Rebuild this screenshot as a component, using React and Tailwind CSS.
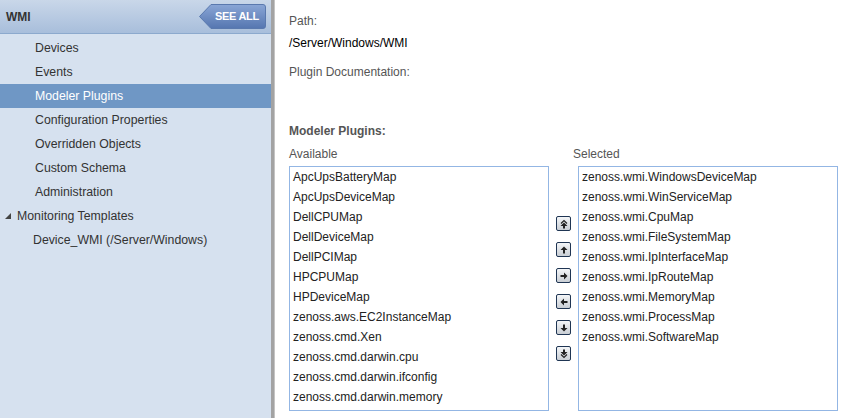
import React from "react"

const navItems = [
  "Devices",
  "Events",
  "Modeler Plugins",
  "Configuration Properties",
  "Overridden Objects",
  "Custom Schema",
  "Administration",
]

const available = [
  "ApcUpsBatteryMap",
  "ApcUpsDeviceMap",
  "DellCPUMap",
  "DellDeviceMap",
  "DellPCIMap",
  "HPCPUMap",
  "HPDeviceMap",
  "zenoss.aws.EC2InstanceMap",
  "zenoss.cmd.Xen",
  "zenoss.cmd.darwin.cpu",
  "zenoss.cmd.darwin.ifconfig",
  "zenoss.cmd.darwin.memory",
]

const selected = [
  "zenoss.wmi.WindowsDeviceMap",
  "zenoss.wmi.WinServiceMap",
  "zenoss.wmi.CpuMap",
  "zenoss.wmi.FileSystemMap",
  "zenoss.wmi.IpInterfaceMap",
  "zenoss.wmi.IpRouteMap",
  "zenoss.wmi.MemoryMap",
  "zenoss.wmi.ProcessMap",
  "zenoss.wmi.SoftwareMap",
]

// little arrow glyphs for the move buttons
const arrows = {
  top: (
    <>
      <path d="M2 4.5 L5 1.5 L8 4.5" fill="none" stroke="#222" strokeWidth="1.2" />
      <path d="M5 3.5 L8.5 7 L6 7 L6 9.5 L4 9.5 L4 7 L1.5 7 Z" fill="#222" />
    </>
  ),
  up: <path d="M5 1.5 L8.5 5 L6 5 L6 8.5 L4 8.5 L4 5 L1.5 5 Z" fill="#222" />,
  right: <path d="M8.5 5 L5 1.5 L5 4 L1.5 4 L1.5 6 L5 6 L5 8.5 Z" fill="#222" />,
  left: <path d="M1.5 5 L5 1.5 L5 4 L8.5 4 L8.5 6 L5 6 L5 8.5 Z" fill="#222" />,
  down: <path d="M5 8.5 L8.5 5 L6 5 L6 1.5 L4 1.5 L4 5 L1.5 5 Z" fill="#222" />,
  bottom: (
    <>
      <path d="M5 6.5 L8.5 3 L6 3 L6 0.5 L4 0.5 L4 3 L1.5 3 Z" fill="#222" />
      <path d="M2 5.5 L5 8.5 L8 5.5" fill="none" stroke="#222" strokeWidth="1.2" />
    </>
  ),
}

function MoveButton({ kind }) {
  return (
    <div className="w-[15px] h-[15px] rounded-[2px] border border-[#1f3553] bg-gradient-to-b from-[#f4f6f8] to-[#c9ced4] flex items-center justify-center">
      <svg width="10" height="10" viewBox="0 0 10 10">
        {arrows[kind]}
      </svg>
    </div>
  )
}

function ListBox({ items, width }) {
  return (
    <div className={`${width} h-[245px] border border-[#93b6e4] bg-white`}>
      {items.map((it) => (
        <div key={it} className="h-[20px] leading-[20px] pl-[3px] text-[12px] text-[#222]">
          {it}
        </div>
      ))}
    </div>
  )
}

export default function App() {
  return (
    <div
      className="w-[846px] h-[418px] flex overflow-hidden bg-white"
      style={{ fontFamily: '"Liberation Sans", Arial, sans-serif' }}
    >
      {/* Sidebar */}
      <div className="w-[271px] h-full bg-[#d6e1ef] flex flex-col">
        <div className="h-[34px] flex items-center justify-between pl-[6px] pr-[5px] bg-gradient-to-b from-[#c9d7e9] to-[#a8bedb] border-b border-[#8ca9cd]">
          <span className="text-[12px] font-bold text-[#333]">WMI</span>
          <div className="relative h-[25px] w-[67px] flex items-center justify-end pr-[7px]">
            <svg className="absolute inset-0" width="67" height="25" viewBox="0 0 67 25">
              <defs>
                <linearGradient id="sa" x1="0" y1="0" x2="0" y2="1">
                  <stop offset="0" stopColor="#8aa6d6" />
                  <stop offset="1" stopColor="#5576b0" />
                </linearGradient>
              </defs>
              <path d="M0.5 12.5 L12 0.5 L64 0.5 Q66.5 0.5 66.5 3 L66.5 22 Q66.5 24.5 64 24.5 L12 24.5 Z" fill="url(#sa)" stroke="#5a79ae" />
            </svg>
            <span className="relative text-[11px] font-bold text-white tracking-tight">SEE ALL</span>
          </div>
        </div>
        <div className="pt-[2px]">
          {navItems.map((n) => (
            <div
              key={n}
              className={`h-[24px] flex items-center pl-[35px] text-[12.3px] ${
                n === "Modeler Plugins" ? "bg-[#6f97c5] text-white" : "text-[#333]"
              }`}
            >
              {n}
            </div>
          ))}
          <div className="h-[24px] flex items-center pl-[4px] text-[12.3px] text-[#333]">
            <svg width="8" height="8" viewBox="0 0 8 8" className="mr-[5px]">
              <path d="M1 7 L7 7 L7 1 Z" fill="#444" />
            </svg>
            Monitoring Templates
          </div>
          <div className="h-[24px] flex items-center pl-[33px] text-[12.3px] text-[#333]">
            Device_WMI (/Server/Windows)
          </div>
        </div>
      </div>

      {/* splitter */}
      <div className="w-[4px] h-full bg-[#a3a3a3] border-r border-[#c4c4c4]" />

      {/* Main */}
      <div className="flex-1 pl-[14px] pt-[13px]">
        <div className="text-[12px] text-[#555] leading-[16px]">Path:</div>
        <div className="mt-[6px] text-[12px] text-black leading-[16px]">/Server/Windows/WMI</div>
        <div className="mt-[13px] text-[12px] text-[#555] leading-[16px]">Plugin Documentation:</div>
        <div className="mt-[43px] text-[12px] font-bold text-[#555] leading-[16px]">Modeler Plugins:</div>
        <div className="flex mt-[7px] text-[12px] text-[#555] leading-[16px]">
          <div className="w-[284px]">Available</div>
          <div>Selected</div>
        </div>
        <div className="flex mt-[4px]">
          <ListBox items={available} width="w-[260px]" />
          <div className="w-[29px] flex flex-col items-center pt-[50px] gap-[11px]">
            {["top", "up", "right", "left", "down", "bottom"].map((k) => (
              <MoveButton key={k} kind={k} />
            ))}
          </div>
          <ListBox items={selected} width="w-[260px]" />
        </div>
      </div>
    </div>
  )
}
